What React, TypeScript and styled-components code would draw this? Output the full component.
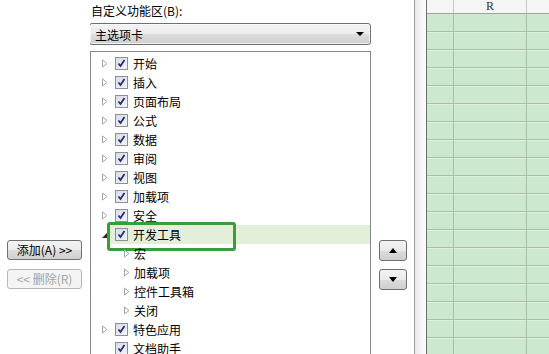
import React from 'react'
import styled, { createGlobalStyle } from 'styled-components'

const GlobalStyle = createGlobalStyle`
  html, body {
    margin: 0;
    padding: 0;
    background: #ffffff;
  }
  body {
    font-family: "Noto Sans CJK SC", "Liberation Sans", sans-serif;
    font-size: 12px;
    color: #000;
  }
`

interface TreeItem {
  label: string
  level: 0 | 1
  arrow: 'closed' | 'open' | 'none'
  checked?: boolean
  selected?: boolean
}

const items: TreeItem[] = [
  { label: '开始', level: 0, arrow: 'closed', checked: true },
  { label: '插入', level: 0, arrow: 'closed', checked: true },
  { label: '页面布局', level: 0, arrow: 'closed', checked: true },
  { label: '公式', level: 0, arrow: 'closed', checked: true },
  { label: '数据', level: 0, arrow: 'closed', checked: true },
  { label: '审阅', level: 0, arrow: 'closed', checked: true },
  { label: '视图', level: 0, arrow: 'closed', checked: true },
  { label: '加载项', level: 0, arrow: 'closed', checked: true },
  { label: '安全', level: 0, arrow: 'closed', checked: true },
  { label: '开发工具', level: 0, arrow: 'open', checked: true, selected: true },
  { label: '宏', level: 1, arrow: 'closed' },
  { label: '加载项', level: 1, arrow: 'closed' },
  { label: '控件工具箱', level: 1, arrow: 'closed' },
  { label: '关闭', level: 1, arrow: 'closed' },
  { label: '特色应用', level: 0, arrow: 'closed', checked: true },
  { label: '文档助手', level: 0, arrow: 'none', checked: true },
]

const Screen = styled.div`
  display: flex;
  width: 549px;
  height: 354px;
  overflow: hidden;
  background: #fff;
`

const Dialog = styled.div`
  display: flex;
  width: 414px;
  flex-shrink: 0;
  border-right: 1px solid #9c9c9c;
  background: #fff;
`

const LeftColumn = styled.div`
  display: flex;
  flex-direction: column;
  gap: 9px;
  width: 83px;
  padding: 240px 0 0 7px;
  flex-shrink: 0;
`

const PushButton = styled.button<{ $disabled?: boolean }>`
  width: 75px;
  height: 20px;
  padding: 0;
  border-radius: 3px;
  border: 1px solid ${p => (p.$disabled ? '#b4b7b9' : '#707070')};
  background: ${p =>
    p.$disabled
      ? '#f4f4f4'
      : 'linear-gradient(#f4f4f4 0%, #ebebeb 50%, #dddddd 51%, #cfcfcf 100%)'};
  color: ${p => (p.$disabled ? '#a3a3a3' : '#000')};
  font-family: "Noto Sans CJK SC", "Liberation Sans", sans-serif;
  font-size: 12px;
  line-height: 18px;
  white-space: nowrap;
  box-sizing: border-box;
`

const MiddleColumn = styled.div`
  display: flex;
  flex-direction: column;
  width: 281px;
  flex-shrink: 0;
  overflow: hidden;
`

const Label = styled.div`
  flex-shrink: 0;
  height: 23px;
  line-height: 14px;
  padding: 4px 0 0 1px;
  box-sizing: border-box;
  font-size: 12px;
`

const Dropdown = styled.div`
  flex-shrink: 0;
  display: flex;
  align-items: center;
  justify-content: space-between;
  height: 22px;
  margin-left: -1px;
  padding: 0 6px 0 5px;
  border: 1px solid #707070;
  border-radius: 3px;
  background: linear-gradient(#f3f3f3 0%, #ebebeb 50%, #dddddd 51%, #cfcfcf 100%);
  box-sizing: border-box;
  box-shadow: inset 0 0 0 1px rgba(255, 255, 255, 0.7);
`

const DropArrow = styled.span`
  width: 0;
  height: 0;
  border-left: 4px solid transparent;
  border-right: 4px solid transparent;
  border-top: 4px solid #000;
`

const ListBox = styled.div`
  flex-shrink: 0;
  margin-top: 6px;
  border: 1px solid #828790;
  border-bottom: none;
  padding-top: 2px;
  background: #fff;
`

const Row = styled.div<{ $level: number; $selected?: boolean }>`
  position: relative;
  display: flex;
  align-items: center;
  height: 19px;
  padding-left: ${p => (p.$level === 1 ? 32 : 10)}px;

  &::before {
    content: '';
    display: ${p => (p.$selected ? 'block' : 'none')};
    position: absolute;
    left: 17px;
    right: 0;
    top: 0;
    bottom: 0;
    background: #e3efd8;
  }
`

const ArrowSlot = styled.span`
  position: relative;
  width: 8px;
  height: 19px;
  display: flex;
  align-items: center;
  justify-content: center;
  margin-right: 6px;
  flex-shrink: 0;
`

const Box = styled.span`
  position: relative;
  display: inline-flex;
  width: 13px;
  height: 13px;
  margin-right: 5px;
  border: 1px solid #8f8f8f;
  box-sizing: border-box;
  background: linear-gradient(135deg, #d8dbe6, #f4f5f8);
  flex-shrink: 0;
`

const Text = styled.span<{ $child?: boolean }>`
  position: relative;
  margin-left: ${p => (p.$child ? '-3px' : '0')};
  line-height: 19px;
  white-space: nowrap;
`

const Highlight = styled.div`
  position: absolute;
  left: 16px;
  top: -3px;
  width: 129px;
  height: 29px;
  border: 3px solid #3a9d3a;
  border-radius: 3px;
  box-sizing: border-box;
  pointer-events: none;
`

const RightColumn = styled.div`
  display: flex;
  flex-direction: column;
  gap: 8px;
  padding: 240px 0 0 8px;
`

const SmallButton = styled.div`
  display: flex;
  align-items: center;
  justify-content: center;
  width: 28px;
  height: 21px;
  border: 1px solid #707070;
  border-radius: 3px;
  box-sizing: border-box;
  background: linear-gradient(#f4f4f4 0%, #ebebeb 50%, #dddddd 51%, #cfcfcf 100%);
`

const Gutter = styled.div`
  width: 11px;
  flex-shrink: 0;
  background: linear-gradient(90deg, #e9e9e9, #f7f7f7 60%, #fdfdfd);
  border-right: 1px solid #6f6f6f;
`

const Sheet = styled.div`
  flex: 1;
  display: flex;
  flex-direction: column;
  background: #cce8cf;
  overflow: hidden;
`

const HeaderRow = styled.div`
  flex-shrink: 0;
  display: grid;
  grid-template-columns: 27px 73px 1fr;
  height: 13px;
  background: #f5f5f5;
  border-bottom: 1px solid #9aa89a;
`

const HeaderCell = styled.div<{ $last?: boolean }>`
  border-right: ${p => (p.$last ? 'none' : '1px solid #c8c8c8')};
  font-family: "Liberation Serif", serif;
  font-size: 12px;
  line-height: 13px;
  text-align: center;
  color: #333;
`

const GridRow = styled.div`
  flex-shrink: 0;
  display: grid;
  grid-template-columns: 27px 73px 1fr;
  height: 18px;
  box-sizing: border-box;
  border-bottom: 1px solid #a9bfa9;
  box-shadow: 0 1px 0 #e0f0e0;
`

const Cell = styled.div<{ $last?: boolean }>`
  border-right: ${p => (p.$last ? 'none' : '1px solid #a9bfa9')};
`

const OpenTriangle = () => (
  <svg width="8" height="9" viewBox="0 0 8 9">
    <path d="M1.5 1 L6 4.5 L1.5 8 Z" fill="#fff" stroke="#a6a6a6" strokeWidth="1" />
  </svg>
)

const ExpandedTriangle = () => (
  <svg width="8" height="8" viewBox="0 0 8 8">
    <path d="M7 1 L7 7 L1 7 Z" fill="#262626" />
  </svg>
)

const Check = () => (
  <svg width="11" height="11" viewBox="0 0 11 11" style={{ position: 'absolute', left: 0, top: 0 }}>
    <path d="M2.5 5.5 L4.5 8 L8.5 2" fill="none" stroke="#1f2f7a" strokeWidth="1.8" />
  </svg>
)

function TreeRow({ item }: { item: TreeItem }) {
  return (
    <Row $level={item.level} $selected={item.selected}>
      <ArrowSlot>
        {item.arrow === 'closed' && <OpenTriangle />}
        {item.arrow === 'open' && <ExpandedTriangle />}
      </ArrowSlot>
      {item.checked !== undefined && (
        <Box>
          <Check />
        </Box>
      )}
      <Text $child={item.level === 1}>{item.label}</Text>
      {item.selected && <Highlight />}
    </Row>
  )
}

export default function App() {
  return (
    <Screen>
      <GlobalStyle />
      <Dialog>
        <LeftColumn>
          <PushButton>添加(A) &gt;&gt;</PushButton>
          <PushButton $disabled>&lt;&lt; 删除(R)</PushButton>
        </LeftColumn>
        <MiddleColumn>
          <Label>自定义功能区(B):</Label>
          <Dropdown>
            <span>主选项卡</span>
            <DropArrow />
          </Dropdown>
          <ListBox>
            {items.map((item, i) => (
              <TreeRow key={i} item={item} />
            ))}
          </ListBox>
        </MiddleColumn>
        <RightColumn>
          <SmallButton>
            <svg width="8" height="5" viewBox="0 0 8 5"><path d="M0 5 L4 0 L8 5 Z" fill="#000" /></svg>
          </SmallButton>
          <SmallButton>
            <svg width="8" height="5" viewBox="0 0 8 5"><path d="M0 0 L8 0 L4 5 Z" fill="#000" /></svg>
          </SmallButton>
        </RightColumn>
      </Dialog>
      <Gutter />
      <Sheet>
        <HeaderRow>
          <HeaderCell />
          <HeaderCell>R</HeaderCell>
          <HeaderCell $last />
        </HeaderRow>
        {Array.from({ length: 19 }).map((_, i) => (
          <GridRow key={i}>
            <Cell />
            <Cell />
            <Cell $last />
          </GridRow>
        ))}
      </Sheet>
    </Screen>
  )
}
